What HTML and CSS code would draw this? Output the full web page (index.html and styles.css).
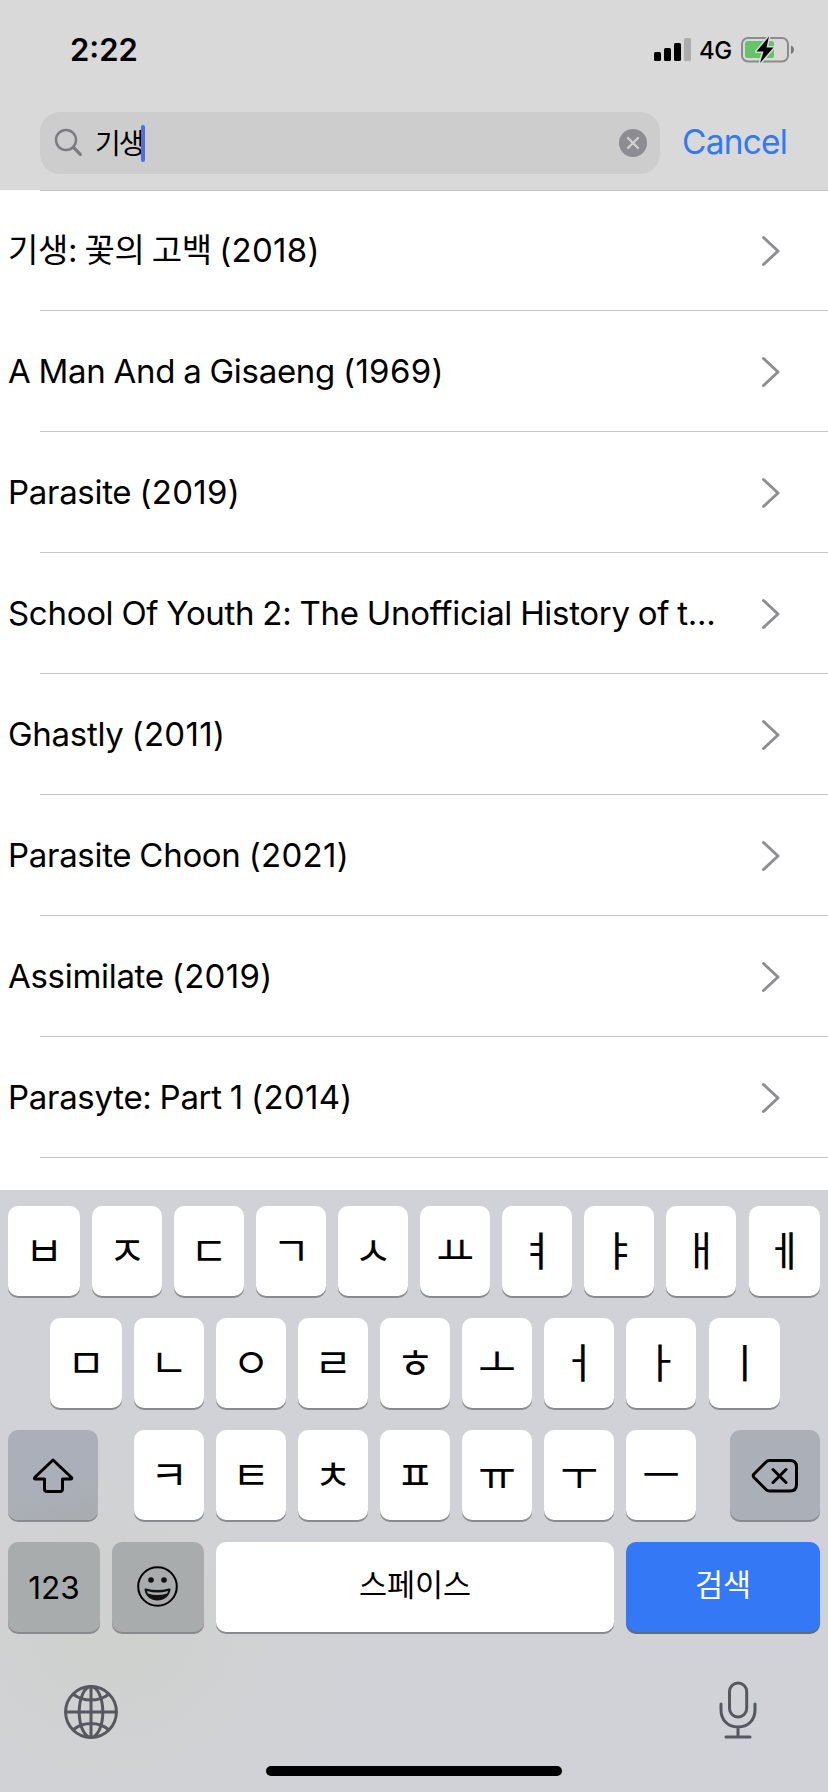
FILE: index.html
```html
<!DOCTYPE html>
<html lang="ko">
<head>
<meta charset="utf-8">
<title>Search</title>
<link rel="stylesheet" href="styles.css">
</head>
<body>
<div class="screen">
  <header class="header">
    <div class="status">
      <span class="time">2:22</span>
      <svg class="signal" width="37" height="23" viewBox="0 0 37 23"><rect y="14" width="7" height="9" rx="1.6"/><rect x="10" y="10" width="7" height="13" rx="1.6"/><rect x="20" y="5" width="7" height="18" rx="1.6"/><rect x="30" width="7" height="23" rx="1.6" fill="#acacac"/></svg>
      <span class="network">4G</span>
      <svg class="battery" width="54" height="28" viewBox="0 0 54 28"><rect x="1" y="2" width="46" height="23.5" rx="6" fill="none" stroke="#8b8b8b" stroke-width="2"/><rect x="4" y="5" width="29" height="17" rx="2.5" fill="#65c466"/><path d="M50 9.500c4 1.500 4 7 0 8.500z" fill="#777"/><path d="M28 .5 15.500 15.500h7L19 27 32.500 11.500h-7z" fill="#000" stroke="#d9d9d9" stroke-width="3" paint-order="stroke" stroke-linejoin="round"/></svg>
    </div>
    <div class="search">
      <div class="field">
        <svg class="glass" width="30" height="30" viewBox="0 0 30 30"><circle cx="12" cy="12" r="10" /><path d="m19.200 19.200 7.100 7.100" stroke-width="3.200"/></svg>
        <span class="query">기생</span><span class="caret"></span>
        <svg class="clear" width="28" height="28" viewBox="0 0 28 28"><circle cx="14" cy="14" r="14" fill="#8d8c92"/><path d="m9 9 10 10M19 9 9 19" stroke="#d0d0d0" stroke-width="2.400" stroke-linecap="round"/></svg>
      </div>
      <span class="cancel">Cancel</span>
    </div>
  </header>
  <main class="results">
    <div class="row"><span class="title korean">기생: 꽃의 고백 <span class="year">(2018)</span></span><svg class="chevron" viewBox="0 0 20 32"><path d="m2.500 2.500 14.500 13.500-14.500 13.500"/></svg></div>
    <div class="row"><span class="title">A Man And a Gisaeng <span class="year">(1969)</span></span><svg class="chevron" viewBox="0 0 20 32"><path d="m2.500 2.500 14.500 13.500-14.500 13.500"/></svg></div>
    <div class="row"><span class="title">Parasite <span class="year">(2019)</span></span><svg class="chevron" viewBox="0 0 20 32"><path d="m2.500 2.500 14.500 13.500-14.500 13.500"/></svg></div>
    <div class="row"><span class="title">School Of Youth 2: The Unofficial History of t...</span><svg class="chevron" viewBox="0 0 20 32"><path d="m2.500 2.500 14.500 13.500-14.500 13.500"/></svg></div>
    <div class="row"><span class="title">Ghastly <span class="year">(2011)</span></span><svg class="chevron" viewBox="0 0 20 32"><path d="m2.500 2.500 14.500 13.500-14.500 13.500"/></svg></div>
    <div class="row"><span class="title">Parasite Choon <span class="year">(2021)</span></span><svg class="chevron" viewBox="0 0 20 32"><path d="m2.500 2.500 14.500 13.500-14.500 13.500"/></svg></div>
    <div class="row"><span class="title">Assimilate <span class="year">(2019)</span></span><svg class="chevron" viewBox="0 0 20 32"><path d="m2.500 2.500 14.500 13.500-14.500 13.500"/></svg></div>
    <div class="row"><span class="title">Parasyte: Part 1 <span class="year">(2014)</span></span><svg class="chevron" viewBox="0 0 20 32"><path d="m2.500 2.500 14.500 13.500-14.500 13.500"/></svg></div>
  </main>
  <section class="keyboard">
    <div class="keys keys-top">
      <span class="key"><b>ㅂ</b></span><span class="key"><b>ㅈ</b></span><span class="key"><b>ㄷ</b></span><span class="key"><b>ㄱ</b></span><span class="key"><b>ㅅ</b></span><span class="key"><b>ㅛ</b></span><span class="key"><b>ㅕ</b></span><span class="key"><b>ㅑ</b></span><span class="key"><b>ㅐ</b></span><span class="key"><b>ㅔ</b></span>
    </div>
    <div class="keys keys-home">
      <span class="key"><b>ㅁ</b></span><span class="key"><b>ㄴ</b></span><span class="key"><b>ㅇ</b></span><span class="key"><b>ㄹ</b></span><span class="key"><b>ㅎ</b></span><span class="key"><b>ㅗ</b></span><span class="key"><b>ㅓ</b></span><span class="key"><b>ㅏ</b></span><span class="key"><b>ㅣ</b></span>
    </div>
    <div class="keys keys-low">
      <span class="key dark shift"><svg width="42" height="38" viewBox="0 0 42 38"><path d="M21 3 39.500 20.500q.8 1.500-.8 1.500H30.500V32q0 2.500-2.500 2.500H15q-2.500 0-2.500-2.500V22H3.500q-1.700 0-.8-1.500z"/></svg></span>
      <span class="key first"><b>ㅋ</b></span><span class="key"><b>ㅌ</b></span><span class="key"><b>ㅊ</b></span><span class="key"><b>ㅍ</b></span><span class="key"><b>ㅠ</b></span><span class="key"><b>ㅜ</b></span><span class="key"><b>ㅡ</b></span>
      <span class="key dark back"><svg width="48" height="36" viewBox="0 0 48 36"><path d="M18.500 2.500H39q6.500 0 6.500 6.500v17.500q0 6.500-6.500 6.500H18.500q-2 0-3.500-1.500L3 19.500q-1.500-1.750 0-3.500L15 4q1.500-1.500 3.500-1.500zM22 11.500l13 13m0-13-13 13"/></svg></span>
    </div>
    <div class="keys keys-base">
      <span class="key gray num">123</span>
      <span class="key gray"><svg width="42" height="42" viewBox="0 0 42 42"><circle cx="20.500" cy="20.500" r="19.300" stroke-width="2"/><circle cx="14" cy="14" r="2.800" class="solid"/><circle cx="27" cy="14" r="2.800" class="solid"/><path class="solid" d="M7.500 23.500q0-1.500 1.500-1 11.500 3 23 0 1.500-.5 1.500 1C32.500 30.500 27 34.500 20.500 34.500S8.500 30.500 7.500 23.500z"/><path d="M10 25q10.500 3 21 0-.3 1.500-1 2.500-9.500 3-19 0-.8-1-1-2.500z" class="teeth"/></svg></span>
      <span class="key label">스페이스</span>
      <span class="key label go">검색</span>
    </div>
    <div class="tools">
      <svg width="54" height="54" viewBox="0 0 54 54"><circle cx="27" cy="27" r="25.400"/><ellipse cx="27" cy="27" rx="11.800" ry="25.400"/><path d="M27 1.600v50.800M1.600 27h50.800M9.500 9.500Q17 15 27 15t17.500-5.500M9.500 44.500Q17 38.500 27 38.500t17.500 6"/></svg>
      <svg class="mic" width="38" height="58" viewBox="0 0 38 58"><rect x="10.500" y="2" width="17.200" height="34" rx="8.600"/><path d="M2 23v6c0 10 7 17 17 17s17-7 17-17v-6M19 46v10M7 56h24"/></svg>
    </div>
    <div class="home"></div>
  </section>
</div>
</body>
</html>
```

FILE: styles.css
```css
* { box-sizing: border-box; }
body { margin: 0; }
.screen {
  width: 828px; height: 1792px; overflow: hidden;
  display: flex; flex-direction: column;
  background: #fff; color: #000;
  font-family: Inter, "Noto Sans CJK KR", sans-serif;
}
svg { display: block; flex: none; }

.header { height: 191px; flex: none; background: linear-gradient(#c3c3c4, #c3c3c4) 40px 190px / 788px 1px no-repeat, linear-gradient(#d9d9d9, #d9d9d9) 0 0 / 828px 190px no-repeat; }
.status { height: 112px; display: flex; align-items: flex-start; padding: 36px 33px 0 70px; }
.time { font-size: 31px; line-height: 27px; font-weight: 600; letter-spacing: 0; margin-right: auto; }
.signal { margin-top: 2px; }
.network { width: 34px; margin: 4px 8px 0 8px; font-size: 24px; line-height: 22px; font-weight: 450; letter-spacing: -.4px; }
.search { display: flex; align-items: center; height: 62px; padding-left: 40px; }
.field { width: 620px; height: 62px; border-radius: 20px; background: #cdcdcd; display: flex; align-items: center; padding: 0 13px 0 14px; }
.glass { fill: none; stroke: #7c7c80; stroke-width: 2.400; stroke-linecap: round; margin-right: 11px; }
.query { font-size: 28px; width: 46px; padding-bottom: 3px; white-space: nowrap; letter-spacing: -2px; }
.caret { width: 4px; height: 37px; border-radius: 2px; background: #4b6ceb; }
.clear { margin-left: auto; }
.cancel { margin-left: 22px; padding-bottom: 2px; font-size: 33.500px; letter-spacing: -.8px; color: #3478f6; }

.results { height: 999px; flex: none; }
.row {
  height: 121px; display: flex; align-items: center; justify-content: space-between;
  padding: 0 47px 0 8px;
  background: linear-gradient(#c6c6c8, #c6c6c8) 40px 100% / 788px 1px no-repeat;
}
.row:first-child { height: 120px; }
.title { font-size: 33px; line-height: 40px; padding-bottom: 2px; letter-spacing: -.3px; word-spacing: -.900px; white-space: pre; }
.korean { word-spacing: -1.800px; }
.year { letter-spacing: .3px; }
.chevron { width: 20px; height: 32px; margin-top: 1px; fill: none; stroke: #8e8e92; stroke-width: 3; stroke-linecap: round; stroke-linejoin: round; }
.row:first-child .chevron { margin-top: -1px; }

.keyboard {
  flex: 1; padding: 16px 8px 0;
  background: radial-gradient(ellipse 280px 250px at 110px 440px, #cfd1ce, #d1d2d8) #d1d2d8;
}
.keys { display: grid; height: 90px; margin-bottom: 22px; column-gap: 12px; }
.keys-top { grid-template-columns: 72px repeat(8, 70px) 71px; }
.keys-home { grid-template-columns: 72px repeat(7, 70px) 71px; padding-left: 42px; }
.keys-top .key:last-child, .keys-home .key:last-child { margin: 0 -1px 0 1px; }
.keys-low { grid-template-columns: 90px 12px repeat(7, 70px) 10px 90px; }
.keys-low .first { grid-column: 3; }
.keys-low .back { grid-column: 11; }
.keys-base { grid-template-columns: 92px 92px 398px 194px; }
.key {
  border-radius: 10px; background: #fff; box-shadow: 0 2px 0 #898a8d;
  display: flex; align-items: center; justify-content: center;
}
.key b { font: 400 41px/40px "Noto Sans CJK KR", sans-serif; padding-bottom: 7px; }
.dark { background: #abafb8; }
.shift { background: linear-gradient(165deg, #abafba 55%, #a9acaf); }
.gray { background: #a9acac; }
.key svg { fill: none; stroke: #000; stroke-width: 3; stroke-linejoin: round; stroke-linecap: round; }
.shift svg, .back svg { margin-top: 2px; }
.key .solid { fill: #111; stroke: none; }
.key .teeth { fill: #a9acac; stroke: none; }
.num { font-size: 31.500px; }
.label { font: 400 30.500px/40px "Noto Sans CJK KR", sans-serif; padding-bottom: 9px; }
.go { background: #3478f6; color: #fff; box-shadow: 0 2px 0 #626a78; }
.tools { display: flex; justify-content: space-between; align-items: flex-start; height: 112px; padding: 31px 63px 0 56px; }
.tools svg { fill: none; stroke: #55585f; stroke-width: 3; stroke-linecap: round; }
.tools .mic { margin-top: -4px; }
.home { width: 296px; height: 10px; border-radius: 5px; background: #000; margin: 0 auto; }
```
